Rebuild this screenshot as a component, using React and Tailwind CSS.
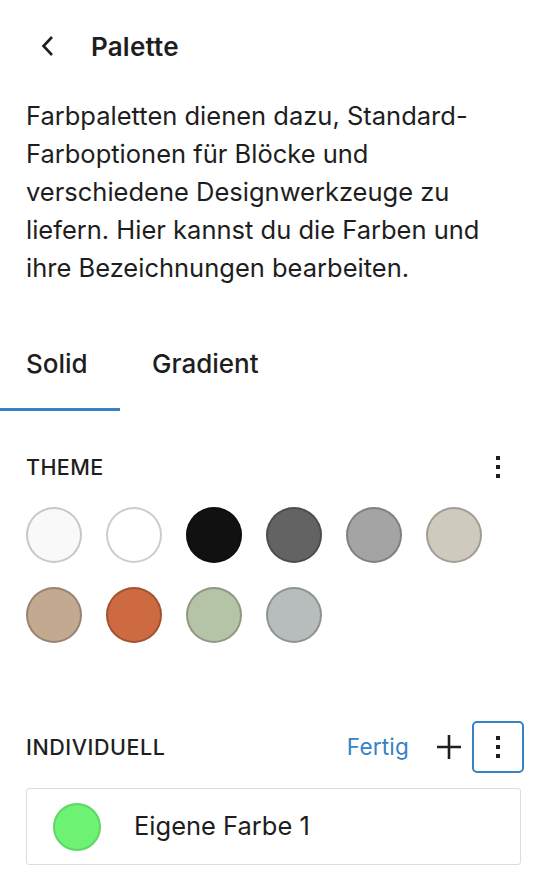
import React from "react";

const theme = [
  { c: "#f9f9f9", b: "rgba(0,0,0,0.2)" },
  { c: "#ffffff", b: "rgba(0,0,0,0.2)" },
  { c: "#111111", b: "rgba(0,0,0,0.2)" },
  { c: "#636363", b: "rgba(0,0,0,0.22)" },
  { c: "#a4a4a4", b: "rgba(0,0,0,0.22)" },
  { c: "#cfcabe", b: "rgba(0,0,0,0.22)" },
  { c: "#c2a990", b: "rgba(0,0,0,0.22)" },
  { c: "#cd6a42", b: "rgba(0,0,0,0.22)" },
  { c: "#b5c4a7", b: "rgba(0,0,0,0.22)" },
  { c: "#b7bdbc", b: "rgba(0,0,0,0.22)" },
];

function Dots() {
  return (
    <svg width="24" height="32" viewBox="0 0 24 32" fill="#1e1e1e">
      <rect x="10" y="5" width="4" height="4" />
      <rect x="10" y="14" width="4" height="4" />
      <rect x="10" y="23" width="4" height="4" />
    </svg>
  );
}

export default function App() {
  return (
    <div
      className="w-[548px] h-[888px] bg-white text-[#1e1e1e] overflow-hidden"
      style={{ fontFamily: "Inter, 'Noto Sans', sans-serif" }}
    >
      {/* Header */}
      <div className="h-[92px] flex items-center pl-[26px]">
        <svg width="36" height="36" viewBox="0 0 36 36" className="ml-[4px]" fill="none">
          <path d="M22 9 L13.5 18 L22 27" stroke="#1e1e1e" strokeWidth="2.6" />
        </svg>
        <span className="ml-[25px] text-[26px] font-semibold tracking-[0.2px]">Palette</span>
      </div>

      {/* Description */}
      <p className="mt-[5px] pl-[26px] pr-[56px] text-[25.5px] leading-[38px]">
        Farbpaletten dienen dazu, Standard-Farboptionen für Blöcke und verschiedene Designwerkzeuge zu liefern. Hier kannst du die Farben und ihre Bezeichnungen bearbeiten.
      </p>

      {/* Tabs */}
      <div className="mt-[28px] flex h-[96px]">
        <div className="w-[120px] flex items-center pl-[26px] text-[26px] font-medium border-b-[3px] border-[#3582c4] pt-[3px]">
          Solid
        </div>
        <div className="px-[32px] flex items-center text-[26px] font-medium">
          Gradient
        </div>
      </div>

      {/* Theme */}
      <div className="pt-[40px] pl-[26px] pr-[24px]">
        <div className="h-[32px] flex items-center justify-between">
          <span className="text-[21.5px] font-medium tracking-[0.4px]">THEME</span>
          <div className="w-[52px] flex justify-center">
            <Dots />
          </div>
        </div>
        <div className="mt-[24px] grid grid-cols-[repeat(6,56px)] gap-x-[24px] gap-y-[24px]">
          {theme.map((s, i) => (
            <div
              key={i}
              className="w-[56px] h-[56px] rounded-full"
              style={{ backgroundColor: s.c, boxShadow: `inset 0 0 0 2px ${s.b}` }}
            />
          ))}
        </div>

        {/* Individuell */}
        <div className="mt-[78px] h-[52px] flex items-center justify-between">
          <span className="text-[21.5px] font-medium tracking-[0.55px]">INDIVIDUELL</span>
          <div className="flex items-center">
            <span className="text-[22.5px] text-[#3582c4] tracking-[0.2px] mr-[27px]">Fertig</span>
            <svg width="26" height="26" viewBox="0 0 26 26" className="mr-[10px]">
              <path d="M13 1 V25 M1 13 H25" stroke="#1e1e1e" strokeWidth="2.6" />
            </svg>
            <div className="w-[52px] h-[52px] rounded-[5px] border-2 border-[#3582c4] flex items-center justify-center">
              <Dots />
            </div>
          </div>
        </div>

        <div className="mt-[15px] mr-[3px] h-[77px] border border-[#dddddd] rounded-[3px] flex items-center pl-[26px]">
          <div
            className="w-[48px] h-[48px] rounded-full"
            style={{ backgroundColor: "#6ef274", boxShadow: "inset 0 0 0 2px rgba(0,0,0,0.12)" }}
          />
          <span className="ml-[33px] text-[25.5px]">Eigene Farbe 1</span>
        </div>
      </div>
    </div>
  );
}
